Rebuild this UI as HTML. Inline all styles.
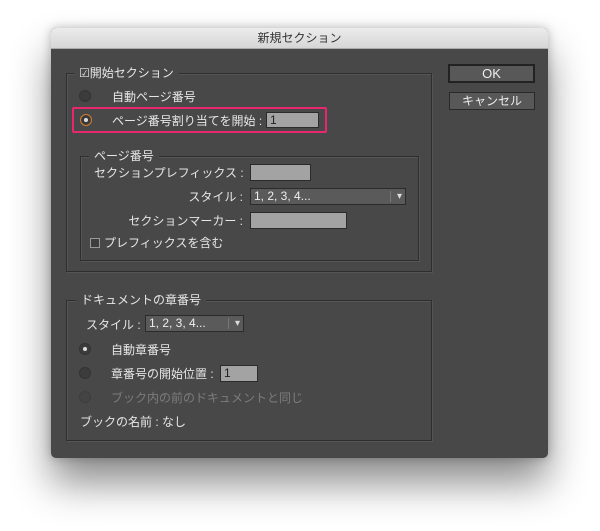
<!DOCTYPE html>
<html><head><meta charset="utf-8"><style>
*{margin:0;padding:0;box-sizing:border-box}
body{width:600px;height:531px;background:#fff;position:relative;overflow:hidden;font-family:"Liberation Sans","Noto Sans CJK JP",sans-serif;font-size:12px;color:#e6e6e6}
.win{position:absolute;left:51px;top:28px;width:497px;height:430px;background:#484848;border-radius:5px;box-shadow:0 25px 40px rgba(0,0,0,.45),0 0 10px rgba(0,0,0,.25);overflow:hidden}
.title{position:absolute;left:0;top:0;width:100%;height:21px;background:linear-gradient(#ececec,#d6d6d6);border-bottom:1px solid #aaa;color:#333;text-align:center;line-height:21px;font-size:12px}
.a{position:absolute;white-space:nowrap;line-height:14px}
.grp{position:absolute;border:1px solid #2e2e2e;box-shadow:inset 1px 1px 0 #555,1px 1px 0 #555}
.lbl{position:absolute;background:#484848;padding:0 5px;line-height:14px;white-space:nowrap}
.inp{position:absolute;background:#a3a3a3;border:1px solid #2b2b2b;color:#222;font-size:12px;line-height:14px;padding-left:3px}
.dd{position:absolute;background:#5a5a5a;border:1px solid #2b2b2b;color:#eee;line-height:15px;padding-left:3px}
.dd:after{content:"▾";position:absolute;right:3px;top:0;font-size:10px;color:#ddd}
.dd i{position:absolute;right:14px;top:2px;width:1px;height:11px;background:#777}
.radio{position:absolute;width:12px;height:12px;border-radius:50%;background:#3c3c3c;border:1px solid #333}
.radio.on:after{content:"";position:absolute;left:3px;top:3px;width:4px;height:4px;border-radius:50%;background:#ddd}
.cb{position:absolute;width:10px;height:10px;border:1px solid #999;background:#3e3e3e}
.btn{position:absolute;background:#585858;border:1px solid #2a2a2a;text-align:center;color:#eee;line-height:16px}
</style></head><body>
<div class="win">
<div class="title">新規セクション</div>

<div class="grp" style="left:15px;top:45px;width:366px;height:199px"></div>
<div class="lbl" style="left:23px;top:38px">☑開始セクション</div>
<div class="radio" style="left:28px;top:62px"></div>
<div class="a" style="left:61px;top:62px">自動ページ番号</div>
<div style="position:absolute;left:21px;top:79px;width:255px;height:26px;border:2px solid #e8276f;border-radius:2px"></div>
<div class="radio on" style="left:29px;top:86px;border-color:#d08030;background:#3a3a3a"></div>
<div class="a" style="left:61px;top:86px">ページ番号割り当てを開始 :</div>
<div class="inp" style="left:215px;top:84px;width:53px;height:16px">1</div>

<div class="grp" style="left:29px;top:128px;width:339px;height:105px"></div>
<div class="lbl" style="left:38px;top:121px">ページ番号</div>
<div class="a" style="left:43px;top:138px;width:149px;text-align:right">セクションプレフィックス :</div>
<div class="inp" style="left:199px;top:136px;width:61px;height:17px"></div>
<div class="a" style="left:43px;top:162px;width:149px;text-align:right">スタイル :</div>
<div class="dd" style="left:199px;top:160px;width:156px;height:17px">1, 2, 3, 4...<i></i></div>
<div class="a" style="left:43px;top:186px;width:149px;text-align:right">セクションマーカー :</div>
<div class="inp" style="left:199px;top:184px;width:97px;height:17px"></div>
<div class="cb" style="left:39px;top:210px"></div>
<div class="a" style="left:53px;top:208px">プレフィックスを含む</div>

<div class="grp" style="left:15px;top:272px;width:366px;height:141px"></div>
<div class="lbl" style="left:25px;top:265px">ドキュメントの章番号</div>
<div class="a" style="left:35px;top:290px">スタイル :</div>
<div class="dd" style="left:94px;top:287px;width:99px;height:17px">1, 2, 3, 4...<i></i></div>
<div class="radio on" style="left:28px;top:315px"></div>
<div class="a" style="left:60px;top:315px">自動章番号</div>
<div class="radio" style="left:28px;top:339px"></div>
<div class="a" style="left:60px;top:339px">章番号の開始位置 :</div>
<div class="inp" style="left:169px;top:337px;width:38px;height:17px">1</div>
<div class="radio" style="left:28px;top:363px;background:#444;border-color:#3e3e3e"></div>
<div class="a" style="left:60px;top:363px;color:#7c7c7c">ブック内の前のドキュメントと同じ</div>
<div class="a" style="left:29px;top:387px">ブックの名前 : なし</div>

<div class="btn" style="left:397px;top:36px;width:87px;height:19px;border:2px solid #222;line-height:15px;font-size:13px">OK</div>
<div class="btn" style="left:398px;top:64px;width:86px;height:18px">キャンセル</div>
</div>
</body></html>
